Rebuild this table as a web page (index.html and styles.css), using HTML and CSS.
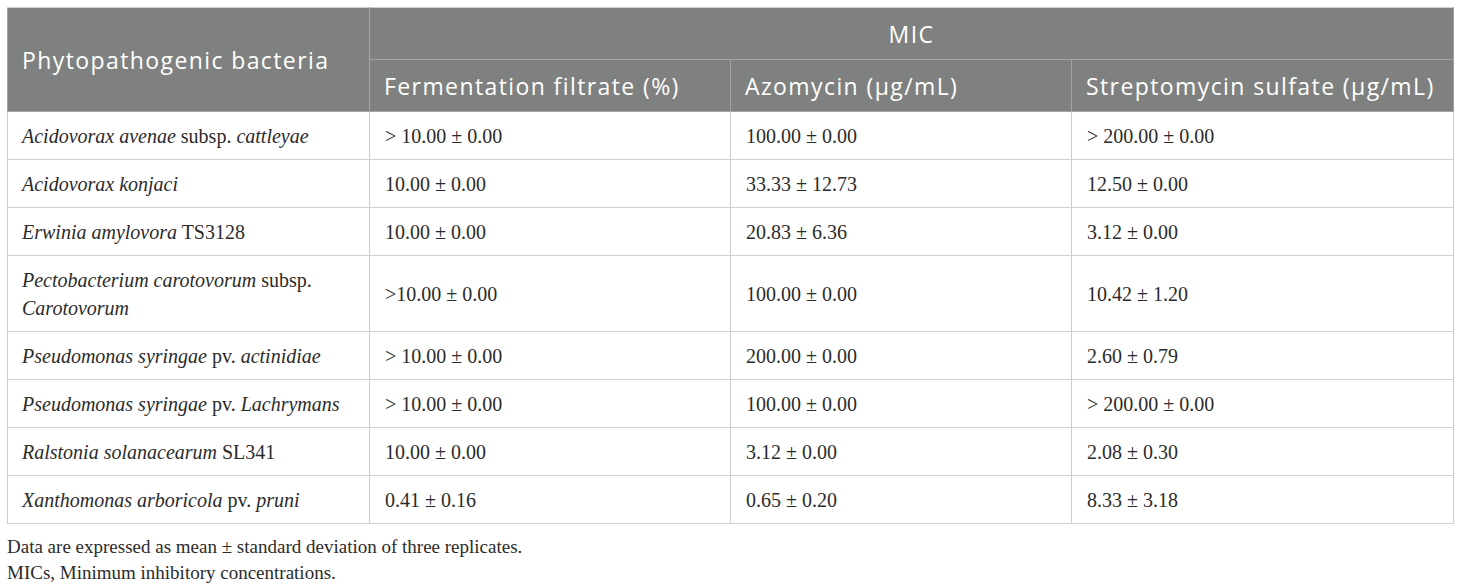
FILE: index.html
```html
<!DOCTYPE html>
<html lang="en">
<head>
<meta charset="utf-8">
<title>MIC table</title>
<link rel="stylesheet" href="styles.css">
</head>
<body>
<div class="wrap">
<table class="mic">
  <colgroup>
    <col class="c1"><col class="c2"><col class="c3"><col class="c4">
  </colgroup>
  <thead>
    <tr>
      <th rowspan="2" class="first">Phytopathogenic bacteria</th>
      <th colspan="3" class="center">MIC</th>
    </tr>
    <tr>
      <th>Fermentation filtrate (%)</th>
      <th>Azomycin (μg/mL)</th>
      <th>Streptomycin sulfate (μg/mL)</th>
    </tr>
  </thead>
  <tbody>
    <tr><td><i>Acidovorax avenae</i> subsp. <i>cattleyae</i></td><td>&gt; 10.00 ± 0.00</td><td>100.00 ± 0.00</td><td>&gt; 200.00 ± 0.00</td></tr>
    <tr><td><i>Acidovorax konjaci</i></td><td>10.00 ± 0.00</td><td>33.33 ± 12.73</td><td>12.50 ± 0.00</td></tr>
    <tr><td><i>Erwinia amylovora</i> TS3128</td><td>10.00 ± 0.00</td><td>20.83 ± 6.36</td><td>3.12 ± 0.00</td></tr>
    <tr><td><i>Pectobacterium carotovorum</i> subsp.<br><i>Carotovorum</i></td><td>&gt;10.00 ± 0.00</td><td>100.00 ± 0.00</td><td>10.42 ± 1.20</td></tr>
    <tr><td><i>Pseudomonas syringae</i> pv. <i>actinidiae</i></td><td>&gt; 10.00 ± 0.00</td><td>200.00 ± 0.00</td><td>2.60 ± 0.79</td></tr>
    <tr><td><i>Pseudomonas syringae</i> pv. <i>Lachrymans</i></td><td>&gt; 10.00 ± 0.00</td><td>100.00 ± 0.00</td><td>&gt; 200.00 ± 0.00</td></tr>
    <tr><td><i>Ralstonia solanacearum</i> SL341</td><td>10.00 ± 0.00</td><td>3.12 ± 0.00</td><td>2.08 ± 0.30</td></tr>
    <tr><td><i>Xanthomonas arboricola</i> pv. <i>pruni</i></td><td>0.41 ± 0.16</td><td>0.65 ± 0.20</td><td>8.33 ± 3.18</td></tr>
  </tbody>
</table>
<div class="notes">
  <p>Data are expressed as mean ± standard deviation of three replicates.</p>
  <p>MICs, Minimum inhibitory concentrations.</p>
</div>
</div>
</body>
</html>
```

FILE: styles.css
```css
html, body {
  margin: 0;
  padding: 0;
  background: #ffffff;
}
.wrap {
  padding: 7px 8px 0 7px;
}
.mic {
  border-collapse: collapse;
  width: 1446px;
  table-layout: fixed;
  border: 1px solid #cfcfcf;
}
.c1 { width: 362px; }
.c2 { width: 361px; }
.c3 { width: 341px; }
.c4 { width: 382px; }
.mic th {
  background: #7f8180;
  color: #ffffff;
  font-family: "Open Sans", "Noto Sans", sans-serif;
  font-weight: 400;
  font-size: 23px;
  letter-spacing: 1.4px;
  text-align: left;
  padding: 0 14px;
  height: 51px;
  border: 1px solid #a3a5a4;
  white-space: nowrap;
}
.mic th.center { text-align: center; }
.mic thead tr:first-child th { border-top-color: #cfcfcf; }
.mic td {
  font-family: "Liberation Serif", "Times New Roman", serif;
  font-size: 20px;
  line-height: 28px;
  color: #2b2b2b;
  padding: 9.5px 15px;
  border: 1px solid #cfcfcf;
  vertical-align: middle;
}
.mic td:first-child { padding-left: 14px; }
.notes {
  font-family: "Liberation Serif", "Times New Roman", serif;
  font-size: 19px;
  line-height: 26px;
  color: #2b2b2b;
  margin-top: 10px;
}
.notes p { margin: 0; }
```
